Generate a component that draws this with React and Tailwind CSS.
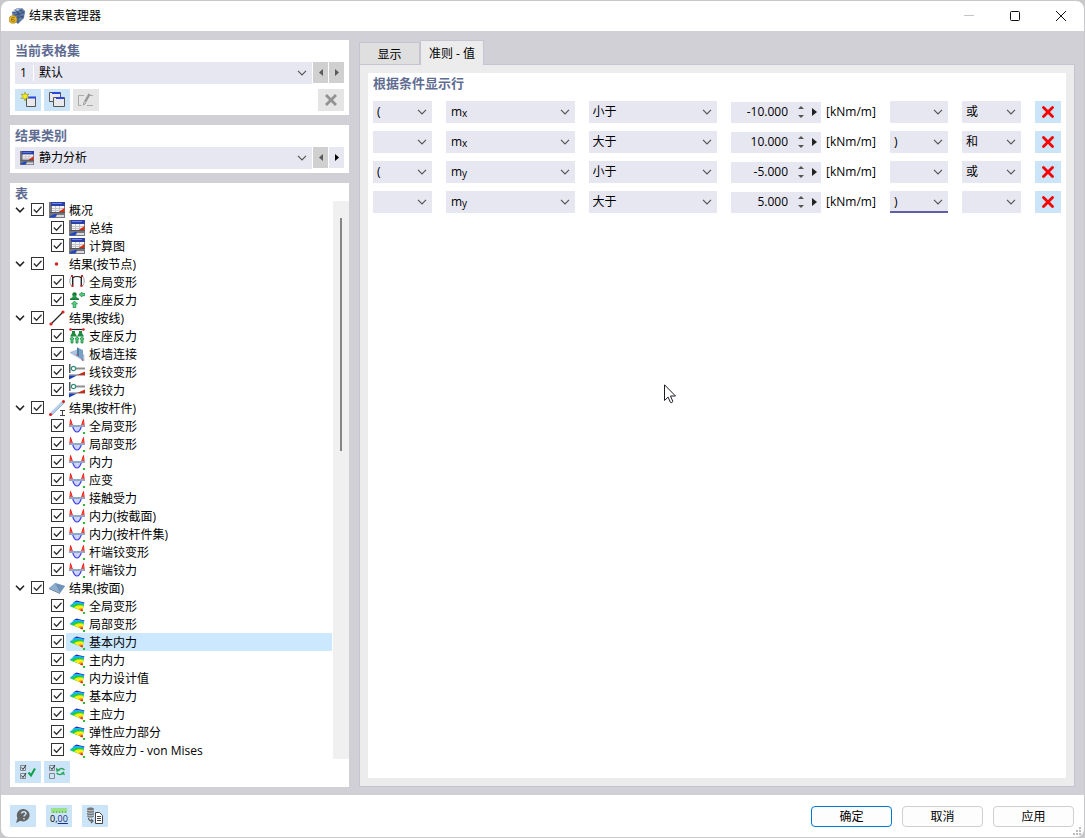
import { useState } from "react";

const arbol = [
  {
    texto: "概况",
    icono: "tabla",
    hijos: [
      { texto: "总结", icono: "tabla" },
      { texto: "计算图", icono: "tabla" },
    ],
  },
  {
    texto: "结果(按节点)",
    icono: "nodo",
    hijos: [
      { texto: "全局变形", icono: "portico" },
      { texto: "支座反力", icono: "apoyo" },
    ],
  },
  {
    texto: "结果(按线)",
    icono: "linea",
    hijos: [
      { texto: "支座反力", icono: "apoyoLinea" },
      { texto: "板墙连接", icono: "muro" },
      { texto: "线铰变形", icono: "articulacion" },
      { texto: "线铰力", icono: "articulacion" },
    ],
  },
  {
    texto: "结果(按杆件)",
    icono: "barra",
    hijos: [
      { texto: "全局变形", icono: "diagrama" },
      { texto: "局部变形", icono: "diagrama" },
      { texto: "内力", icono: "diagrama" },
      { texto: "应变", icono: "diagrama" },
      { texto: "接触受力", icono: "diagrama" },
      { texto: "内力(按截面)", icono: "diagrama" },
      { texto: "内力(按杆件集)", icono: "diagrama" },
      { texto: "杆端铰变形", icono: "diagrama" },
      { texto: "杆端铰力", icono: "diagrama" },
    ],
  },
  {
    texto: "结果(按面)",
    icono: "superficie",
    hijos: [
      { texto: "全局变形", icono: "isobandas" },
      { texto: "局部变形", icono: "isobandas" },
      { texto: "基本内力", icono: "isobandas" },
      { texto: "主内力", icono: "isobandas" },
      { texto: "内力设计值", icono: "isobandas" },
      { texto: "基本应力", icono: "isobandas" },
      { texto: "主应力", icono: "isobandas" },
      { texto: "弹性应力部分", icono: "isobandas" },
      { texto: "等效应力 - von Mises", icono: "isobandas" },
    ],
  },
];

const condicionesIniciales = [
  { abre: "(", campo: "mx", operador: "小于", valor: "-10.000", cierra: "", union: "或" },
  { abre: "", campo: "mx", operador: "大于", valor: "10.000", cierra: ")", union: "和" },
  { abre: "(", campo: "my", operador: "小于", valor: "-5.000", cierra: "", union: "或" },
  { abre: "", campo: "my", operador: "大于", valor: "5.000", cierra: ")", union: "" },
];

const dibujos = {
  tabla: (
    <>
      <path fill="#77777b" d="M0 0h16v16H0z" />
      <path fill="#2b3fa8" d="M2 0h14v4H2z" />
      <path fill="#6f86de" d="M3 1h10v1H3z" />
      <path fill="#f4f4f6" d="M3 4h12v6H3z" />
      <path stroke="#c3c3ca" d="M3 6.500h12M3 8.500h12M6.500 4v6M10.500 4v6" />
      <path fill="#d62c12" d="M9 10.500 15.500 6v4.500z" />
      <path fill="#55555b" d="M1 10h15v1H1z" />
      <path fill="#1f46c8" d="M1 15.500V14l5-2h2l-2 3.500z" />
      <path fill="#d9dbe4" d="M8 13h7v2H7z" />
    </>
  ),
  nodo: <circle cx="7.500" cy="8" r="1.700" fill="#d81e1e" />,
  portico: (
    <>
      <path fill="none" stroke="#9a9a9a" d="M2.500 2C.3 5 .3 9 2.500 12M13.500 2c2.200 3 2.200 7 0 10" />
      <path fill="none" stroke="#222" strokeWidth="1.400" d="M3.700 12V3.700C6 2.300 10 2.300 12.300 3.700V12" />
      <path fill="#d92525" d="M2 1h2v2H2zM12 1h2v2h-2zM2.500 11h2v2h-2zM11.500 11h2v2h-2z" />
    </>
  ),
  apoyo: (
    <>
      <circle cx="5.500" cy="2.500" r="2.200" fill="#167a34" />
      <path fill="#2f9e4e" d="M5.500 2.500 9.500 7h-8z" />
      <path fill="#187a36" d="M1 6.500h9V8H1z" />
      <path fill="#55cf7d" stroke="#1e8a45" strokeWidth=".7" d="m10 2.500 3-2.200v1.200h3v2.200h-3V5zM5.500 9 8.500 12H6.800v4H4.200v-4H2.500z" />
    </>
  ),
  linea: (
    <>
      <path stroke="#222" strokeWidth="1.200" d="M2 14 14 2" />
      <circle cx="2" cy="14" r="1.600" fill="#e02020" />
      <circle cx="14" cy="2" r="1.600" fill="#e02020" />
    </>
  ),
  apoyoLinea: (
    <>
      <path stroke="#222" strokeWidth="1.200" d="M1 1.500h14" />
      <circle cx="1.500" cy="1.500" r="1.300" fill="#e02020" />
      <circle cx="14.500" cy="1.500" r="1.300" fill="#e02020" />
      <path fill="#1f8a40" d="M3 3h3v2l2 3.500H1L3 5zM10 3h3v2l2 3.500H8L10 5z" />
      <path
        fill="#55cf7d"
        stroke="#1e8a45"
        strokeWidth=".8"
        d="m3 8.500 2 2.500H4v4H2v-4H1zM8 8.500l2 2.500H9v4H7v-4H6zM13 8.500l2 2.500h-1v4h-2v-4h-1z"
      />
    </>
  ),
  muro: (
    <>
      <path fill="#a9c4e0" stroke="#8aa8c8" strokeWidth=".5" d="m1 6.500 7-2.500 7 5v6z" />
      <path fill="#7ba0c6" d="M8 1.500 14 4v11L8 9z" />
      <path fill="#4e7aa6" d="m8 1.500 2 1V11L8 9z" />
      <path stroke="#d44" strokeWidth="1.200" d="m7.500 8.500 1 1M13 13.500l1 1" />
    </>
  ),
  articulacion: (
    <>
      <path fill="#555" d="M0 0h1.500v9H0z" />
      <path fill="#8e8e8e" d="M7 3.500h9v2H7z" />
      <circle cx="4.500" cy="4.500" r="2.200" fill="#fff" stroke="#2e8e7c" strokeWidth="1.200" />
      <path fill="#b4b4b8" d="M0 10h16v2H0z" />
      <path fill="#cc2a15" d="M8 11 16 7.500V11z" />
      <path fill="#1c3fae" d="M0 11.500h8l-8 4z" />
    </>
  ),
  barra: (
    <>
      <path stroke="#b4cde8" strokeWidth="3" d="M2 14 14 2" />
      <path stroke="#7fa0c4" strokeWidth=".7" d="M3 15 15 3" />
      <circle cx="1.500" cy="14.500" r="1.500" fill="#d81e1e" />
      <circle cx="14.500" cy="1.500" r="1.500" fill="#d81e1e" />
      <path stroke="#444" d="M11 10.500h5M13.500 10v5M11 15.500h5" />
    </>
  ),
  diagrama: (
    <>
      <path fill="#cfd3ff" stroke="#4444e8" strokeWidth="1.200" d="M3.500 8c1.300 4.500 3 6 4.500 6s3.200-1.500 4.500-6z" />
      <path fill="#ff6a62" stroke="#f02018" d="M.8 8 1.500 1.500 3.700 8M12.300 8l2.200-6.500L15.200 8" />
      <path fill="#8da9c6" d="M0 7h16v2H0z" />
      <path fill="#23c02c" d="M14 14h2v2h-2z" />
    </>
  ),
  superficie: (
    <>
      <path fill="#8fadcd" d="m0 8 6-5 10 3-5 7z" />
      <path fill="#6f92b9" d="m6 3 10 3-5 7z" />
      <path fill="#5a7896" d="m0 8 11 5v1L0 9z" />
    </>
  ),
  isobandas: (
    <>
      <path fill="#2030c0" d="M4 4.500 7.500 2.500 15.500 4.500 14.500 7z" />
      <path fill="#16b8f2" d="M.5 8 5 4.300c3-.6 7-.4 10 1L13.500 13 4 9.300z" />
      <path fill="#24cc3c" d="M1.500 8.500C5 5.500 11 5 14.700 6.500L13.500 13z" />
      <path fill="#f7f012" d="M5 9.500C7.500 7 11.500 6.800 14.500 8l-1 5.500z" />
      <path fill="#f59a1a" d="M9.500 11.500c1-1.500 3-1.500 4.500-1l-.5 3z" />
      <path fill="#d81818" d="M11 12.300c.7-.7 1.500-.9 2.800-.7l-.3 2z" />
      <path fill="#23c02c" d="M14 14h2v2h-2z" />
    </>
  ),
};

function Icono({ tipo, className = "size-4" }) {
  return (
    <svg viewBox="0 0 16 16" className={`${className} shrink-0`} aria-hidden="true">
      {dibujos[tipo]}
    </svg>
  );
}

function Flecha({ className }) {
  return (
    <svg viewBox="0 0 10 6" className={className} fill="none" stroke="currentColor" aria-hidden="true">
      <path d="m1 .8 4 4 4-4" strokeWidth="1.200" />
    </svg>
  );
}

function Lista({ etiqueta, valor, opciones, onChange, adorno, children, className = "pl-1", activo }) {
  return (
    <div className="relative min-w-0 flex-1">
      <select
        aria-label={etiqueta}
        value={valor}
        onChange={(e) => onChange?.(e.target.value)}
        className={`block h-[22px] w-full appearance-none rounded-none border-b-2 bg-[#e7e7f2] pt-0.5 pr-5 leading-4 outline-none ${
          activo ? "border-[#5f5fa8]" : "border-[#e7e7f2]"
        } ${children ? "text-transparent" : "text-black"} ${className}`}
      >
        {opciones.map((o) => (
          <option key={o} value={o}>{o}</option>
        ))}
      </select>
      {(adorno || children) && (
        <span className="pointer-events-none absolute inset-y-0 left-[5px] flex items-center" aria-hidden="true">
          {adorno}
          {children}
        </span>
      )}
      <Flecha className="pointer-events-none absolute top-2 right-[5px] h-1.5 w-2.5 text-[#555]" />
    </div>
  );
}

function BotonFlecha({ etiqueta, izquierda, activo }) {
  return (
    <button
      aria-label={etiqueta}
      className={`flex h-[21px] w-[15px] items-center justify-center ${
        activo ? "bg-[#e7e7f2] text-black" : "bg-[#d0d0d0] text-[#5a5a5a]"
      }`}
    >
      <svg viewBox="0 0 4 7" className="h-[7px] w-1" fill="currentColor">
        <path d={izquierda ? "M4 0v7L0 3.500z" : "M0 0v7l4-3.500z"} />
      </svg>
    </button>
  );
}

function BotonIcono({ etiqueta, desactivado, children }) {
  return (
    <button
      aria-label={etiqueta}
      disabled={desactivado}
      className={`flex h-[22px] w-[26px] shrink-0 items-center justify-center ${
        desactivado ? "bg-[#e5e5e5]" : "bg-[#cce4f7]"
      }`}
    >
      {children}
    </button>
  );
}

function Casilla({ etiqueta }) {
  return (
    <span className="mb-0.5 grid size-[13px] shrink-0">
      <input
        type="checkbox"
        defaultChecked
        aria-label={etiqueta}
        className="peer col-start-1 row-start-1 size-[13px] appearance-none border border-[#333] bg-white"
      />
      <svg
        viewBox="0 0 13 13"
        className="pointer-events-none invisible col-start-1 row-start-1 size-[13px] peer-checked:visible"
        fill="none"
        stroke="#333"
        strokeWidth="1.300"
      >
        <path d="m2.800 6.500 2.700 2.700 5-5.400" />
      </svg>
    </span>
  );
}

function Titulo({ children, className = "h-[22px]" }) {
  return <h2 className={`text-[13px] leading-5 font-bold text-[#5f6c92] ${className}`}>{children}</h2>;
}

function Arbol() {
  const [seleccion, setSeleccion] = useState("4-2");

  return (
    <div className="flex min-h-0 flex-1">
      <ul className="min-w-0 flex-1 overflow-hidden">
        {arbol.map((grupo, i) => (
          <li key={grupo.texto}>
            <div className="flex h-[18px] items-center pl-[5px]">
              <button aria-label={`展开 ${grupo.texto}`} className="mr-1.5 flex w-2.5">
                <svg viewBox="0 0 10 6" className="h-1.5 w-2.5" fill="none" stroke="#222" strokeWidth="1.600">
                  <path d="m1 .8 4 4 4-4" />
                </svg>
              </button>
              <Casilla etiqueta={grupo.texto} />
              <span className="flex items-center gap-1 pl-[5px]">
                <Icono tipo={grupo.icono} />
                <span className="pt-0.5 leading-4">{grupo.texto}</span>
              </span>
            </div>
            <ul>
              {grupo.hijos.map((hijo, j) => {
                const id = `${i}-${j}`;
                return (
                  <li key={id} className="flex h-[18px] items-center gap-0.5 pr-px pl-[41px]">
                    <Casilla etiqueta={hijo.texto} />
                    <button
                      onClick={() => setSeleccion(id)}
                      className={`flex h-full flex-1 items-center gap-1 rounded-[1px] pl-[3px] whitespace-nowrap ${
                        id === seleccion ? "bg-[#cce8ff]" : ""
                      }`}
                    >
                      <Icono tipo={hijo.icono} />
                      <span className="pt-0.5 leading-4">{hijo.texto}</span>
                    </button>
                  </li>
                );
              })}
            </ul>
          </li>
        ))}
      </ul>
      <div className="flex w-4 justify-center bg-[#f0f0f0] pt-[17px]">
        <div className="h-[43%] w-0.5 bg-[#858585]" />
      </div>
    </div>
  );
}

function PanelIzquierdo() {
  return (
    <aside className="flex w-[339px] shrink-0 flex-col gap-2.5">
      <section className="bg-white px-[5px] pb-1">
        <Titulo>当前表格集</Titulo>
        <div className="flex gap-px">
          <Lista
            etiqueta="当前表格集"
            valor="默认"
            opciones={["默认"]}
            className="pl-6"
            adorno={<span className="h-4 w-3.5 border-r border-white leading-4">1</span>}
          />
          <BotonFlecha etiqueta="上一个表格集" izquierda />
          <BotonFlecha etiqueta="下一个表格集" />
        </div>
        <div className="mt-[5px] flex gap-[3px]">
          <BotonIcono etiqueta="新建">
            <svg viewBox="0 0 18 18" className="size-[18px]">
              <path fill="#e9e9ec" stroke="#555" d="M7.500 6.500h9v9h-9z" />
              <path fill="#2b45e0" d="M9 5.500h8v2H9z" />
              <path fill="#f5ee1e" stroke="#8f8b24" strokeWidth=".6" d="m6 1 .8 2.500L10 3 8 5.200l2 2.300-3-.5L6 10 5 7l-3 .5 2-2.300L2 3l3.200.5z" />
            </svg>
          </BotonIcono>
          <BotonIcono etiqueta="复制">
            <svg viewBox="0 0 18 18" className="size-[18px]">
              <path fill="#e9e9ec" stroke="#555" d="M1.500 1.500h11v9h-11z" />
              <path fill="#2b45e0" d="M4 1h8v2H4z" />
              <path fill="#e9e9ec" stroke="#555" d="M5.500 6.500h11v9h-11z" />
              <path fill="#2b45e0" d="M8 6h8v2H8z" />
            </svg>
          </BotonIcono>
          <BotonIcono etiqueta="重命名" desactivado>
            <svg viewBox="0 0 18 18" className="size-[18px]" fill="none" stroke="#aaa">
              <path d="M7 4.500H1.500v10h3M12 4.500h4M10 14.500h6" />
              <path stroke="#999" strokeWidth="2.500" d="m8 11 4.500-8" />
              <path stroke="#999" d="m7 11-.5 3 2.500-2" />
            </svg>
          </BotonIcono>
          <span className="flex-1" />
          <BotonIcono etiqueta="删除" desactivado>
            <svg viewBox="0 0 12 12" className="size-3" stroke="#929292" strokeWidth="2.800">
              <path d="m1 1 10 10M11 1 1 11" />
            </svg>
          </BotonIcono>
        </div>
      </section>

      <section className="bg-white px-[5px] pb-1">
        <Titulo>结果类别</Titulo>
        <div className="flex gap-px">
          <Lista
            etiqueta="结果类别"
            valor="静力分析"
            opciones={["静力分析"]}
            className="pl-6"
            adorno={<Icono tipo="tabla" className="size-3.5" />}
          />
          <BotonFlecha etiqueta="上一个类别" izquierda />
          <BotonFlecha etiqueta="下一个类别" activo />
        </div>
      </section>

      <section className="flex min-h-0 flex-1 flex-col bg-white pb-1">
        <Titulo className="h-[18px] pl-[5px]">表</Titulo>
        <Arbol />
        <div className="mt-0.5 flex gap-[3px] pl-[5px]">
          <BotonIcono etiqueta="全选">
            <svg viewBox="0 0 16 16" className="size-4" fill="none" stroke="#888">
              <path d="M.5 1.500h5v5h-5zM.5 9.500h5v5h-5z" />
              <path stroke="#333" d="m1.500 3.500 1.500 2L6 1M1.500 11.500l1.500 2L6 9" />
              <path stroke="#0fa048" strokeWidth="2" d="m8.500 8.500 2.500 3 4-7" />
            </svg>
          </BotonIcono>
          <BotonIcono etiqueta="反选">
            <svg viewBox="0 0 16 16" className="size-4" fill="none" stroke="#888">
              <path d="M.5 1.500h5v5h-5zM.5 9.500h5v5h-5z" />
              <path stroke="#333" d="m1.500 3.500 1.500 2L6 1" />
              <path stroke="#27a457" strokeWidth="1.500" d="M15.500 6c-2-2-4-2-6 0M7.500 9c2 2 5 2 7 0" />
              <path fill="#27a457" stroke="none" d="M7 3.500 7.500 8 11 6.500zM15.800 11.500 15 7.500 12 9z" />
            </svg>
          </BotonIcono>
        </div>
      </section>
    </aside>
  );
}

function FilaCondicion({ fila, activo, onCambiar, onEliminar }) {
  return (
    <li className="grid grid-cols-[59px_minmax(0,1fr)_minmax(0,1fr)_145px_58px_59px_26px] gap-x-3.5">
      <Lista etiqueta="左括号" valor={fila.abre} opciones={["", "("]} onChange={(v) => onCambiar("abre", v)} />
      <Lista etiqueta="内力" valor={fila.campo} opciones={["mx", "my"]} onChange={(v) => onCambiar("campo", v)}>
        <span>m</span>
        <span className="pt-0.5 text-[10px] leading-3">{fila.campo.slice(1)}</span>
      </Lista>
      <Lista etiqueta="运算符" valor={fila.operador} opciones={["小于", "大于"]} onChange={(v) => onCambiar("operador", v)} />
      <div className="flex items-center gap-[5px]">
        <div className="flex h-[21px] w-[90px] shrink-0 items-center bg-[#e7e7f2]">
          <input
            type="text"
            aria-label="数值"
            value={fila.valor}
            onChange={(e) => onCambiar("valor", e.target.value)}
            className="w-[57px] bg-transparent text-right outline-none"
          />
          <span className="ml-2.5 flex flex-col gap-1.5 text-[#555]">
            <button aria-label="增加" className="flex">
              <svg viewBox="0 0 6 3" className="h-[3px] w-1.5" fill="currentColor"><path d="m3 0 3 3H0z" /></svg>
            </button>
            <button aria-label="减少" className="flex">
              <svg viewBox="0 0 6 3" className="h-[3px] w-1.5" fill="currentColor"><path d="M0 0h6L3 3z" /></svg>
            </button>
          </span>
          <button aria-label="更多" className="ml-2 flex">
            <svg viewBox="0 0 5 8" className="h-2 w-[5px]" fill="#222"><path d="M0 0v8l5-4z" /></svg>
          </button>
        </div>
        <span>[kNm/m]</span>
      </div>
      <Lista etiqueta="右括号" valor={fila.cierra} opciones={["", ")"]} activo={activo} onChange={(v) => onCambiar("cierra", v)} />
      <Lista etiqueta="连接" valor={fila.union} opciones={["", "或", "和"]} onChange={(v) => onCambiar("union", v)} />
      <button aria-label="删除条件" onClick={onEliminar} className="flex h-[22px] items-center justify-center bg-[#cce4f7]">
        <svg viewBox="0 0 12 12" className="size-3" stroke="#f80000" strokeWidth="2.800" strokeLinecap="round">
          <path d="m1.500 1.500 9 9M10.500 1.500l-9 9" />
        </svg>
      </button>
    </li>
  );
}

function PanelDerecho() {
  const [condiciones, setCondiciones] = useState(condicionesIniciales);

  const cambiar = (indice, campo, valor) => {
    setCondiciones(condiciones.map((c, i) => (i === indice ? { ...c, [campo]: valor } : c)));
  };

  const eliminar = (indice) => {
    setCondiciones(condiciones.filter((_, i) => i !== indice));
  };

  return (
    <main className="flex min-w-0 flex-1 flex-col">
      <div role="tablist" className="flex items-end">
        <button role="tab" aria-selected="false" className="h-[22px] w-[61px] border border-b-0 border-[#c5c4d2] bg-[#dfdfdf] pt-0.5">
          显示
        </button>
        <button role="tab" aria-selected="true" className="relative z-10 -mb-px h-[25px] w-16 border border-b-0 border-[#c5c4d2] bg-[#ececec] pt-0.5">
          准则 - 值
        </button>
      </div>
      <div role="tabpanel" className="flex flex-1 flex-col border border-[#c5c4d2] bg-[#ececec] p-2">
        <div className="flex-1 bg-white px-[5px]">
          <Titulo className="h-7">根据条件显示行</Titulo>
          <ul className="flex flex-col gap-2">
            {condiciones.map((fila, i) => (
              <FilaCondicion
                key={i}
                fila={fila}
                activo={i === 3}
                onCambiar={(campo, valor) => cambiar(i, campo, valor)}
                onEliminar={() => eliminar(i)}
              />
            ))}
          </ul>
        </div>
      </div>
    </main>
  );
}

export default function App() {
  return (
    <div className="h-screen bg-[#c8c8cb] p-px font-['Open_Sans','Noto_Sans_CJK_SC',sans-serif] text-xs text-black">
      <div className="relative flex h-full flex-col overflow-hidden rounded-lg bg-white">
        {/* Barra de título */}
        <header className="flex h-[30px] shrink-0 items-center pr-[18px] pl-2">
          <svg viewBox="0 0 16 16" className="size-4">
            <path fill="#5f7ba6" d="m3 4 5-4h5l3 3-1 7-6 6-5-4z" />
            <path fill="#a9bedb" d="m3 4 5-4h5l-4 4z" />
            <path fill="none" stroke="#344a6e" strokeWidth=".8" d="m6 1.500 8 9M10 .5 15.500 6M4 5l9-3M5 7.500 15.500 4M7 10l8-2M9 4v11" />
            <circle cx="4" cy="11.500" r="3.900" fill="#e2b62c" stroke="#b58d1c" strokeWidth=".6" />
            <path fill="none" stroke="#8a6a10" strokeWidth=".9" d="M5.500 9.500C3.500 9 2.500 10 2.500 12s3 2 3 .5-2-1.500-3-.5" />
          </svg>
          <h1 className="ml-1 flex-1">结果表管理器</h1>
          <div className="flex items-center gap-9">
            <button aria-label="最小化" className="flex">
              <svg viewBox="0 0 10 10" className="size-2.5" stroke="#c4c4c4"><path d="M0 4.500h10" /></svg>
            </button>
            <button aria-label="最大化" className="flex">
              <svg viewBox="0 0 10 10" className="size-2.5" fill="none" stroke="#111">
                <rect x=".5" y=".5" width="9" height="9" rx="1" />
              </svg>
            </button>
            <button aria-label="关闭" className="flex">
              <svg viewBox="0 0 10 10" className="size-2.5" stroke="#111"><path d="m0 0 10 10M10 0 0 10" /></svg>
            </button>
          </div>
        </header>

        <div className="flex min-h-0 flex-1 gap-2.5 bg-[#d1d0d6] px-[9px] pt-[9px] pb-2">
          <PanelIzquierdo />
          <PanelDerecho />
        </div>

        {/* Pie */}
        <footer className="flex h-[42px] shrink-0 items-center gap-2.5 pr-2.5 pl-[9px]">
          <BotonIcono etiqueta="帮助">
            <svg viewBox="0 0 16 16" className="size-4">
              <path fill="#636363" d="M8.500 1a6.200 6.200 0 1 1-3 11.700L1 15l1.500-5A6.200 6.200 0 0 1 8.500 1z" />
              <path fill="none" stroke="#cce4f7" strokeWidth="1.500" d="M6.500 5.500c0-2.500 4.500-2.500 4.500 0 0 1.500-2 1.500-2 3M9 10v1.500" />
            </svg>
          </BotonIcono>
          <BotonIcono etiqueta="单位和小数位">
            <span className="flex flex-col items-center">
              <svg viewBox="0 0 16 5" className="h-[5px] w-4">
                <path fill="#9be08b" d="M0 0h16v5H0z" />
                <path stroke="#5fa852" strokeWidth=".7" d="M2.500 3v2M5.500 3v2M8.500 3v2M11.500 3v2M14.500 3v2" />
              </svg>
              <span className="text-[9px] leading-3">
                0,<span className="text-[#1b2f80] underline">00</span>
              </span>
            </span>
          </BotonIcono>
          <BotonIcono etiqueta="导出">
            <svg viewBox="0 0 18 18" className="size-[18px]" fill="none" stroke="#666">
              <path fill="#777" stroke="none" d="M1 2c0-2 7-2 7 0v7c0 2-7 2-7 0z" />
              <path stroke="#cce4f7" strokeWidth=".8" d="M1 3c1 1 6 1 7 0M1 5.500c1 1 6 1 7 0M1 8c1 1 6 1 7 0" />
              <path strokeWidth="1.300" d="M2.500 11c0 2 1 3 4 3M5 12l2 2-2 2" />
              <path fill="#fff" stroke="#444" d="M9.500 5.500h4l3 3v8h-7zM11 9.500h4M11 11.500h4M11 13.500h4" />
            </svg>
          </BotonIcono>
          <span className="flex-1" />
          <button className="h-[21px] w-[81px] rounded border border-[#0078d4] bg-[#fdfdfd] pt-0.5 leading-4">确定</button>
          <button className="h-[21px] w-[81px] rounded border border-[#d0d0d0] bg-[#fdfdfd] pt-0.5 leading-4">取消</button>
          <button className="h-[21px] w-[81px] rounded border border-[#d0d0d0] bg-[#fdfdfd] pt-0.5 leading-4">应用</button>
        </footer>

        <svg viewBox="0 0 8 8" className="absolute right-[3px] bottom-0.5 size-2" fill="#bdbdbd" aria-hidden="true">
          <path d="M6 0h2v2H6zM3 3h2v2H3zM6 3h2v2H6zM0 6h2v2H0zM3 6h2v2H3zM6 6h2v2H6z" />
        </svg>

        {/* Puntero */}
        <svg viewBox="0 0 13 20" className="pointer-events-none absolute top-[383px] left-[663px] h-5 w-[13px]" aria-hidden="true">
          <path fill="#fff" stroke="#1c1c28" d="M.5.8v15.700l3.600-3.400 2.300 5.200c1 .9 2.700 0 2.300-1.200L6.500 12h5z" />
        </svg>
      </div>
    </div>
  );
}
